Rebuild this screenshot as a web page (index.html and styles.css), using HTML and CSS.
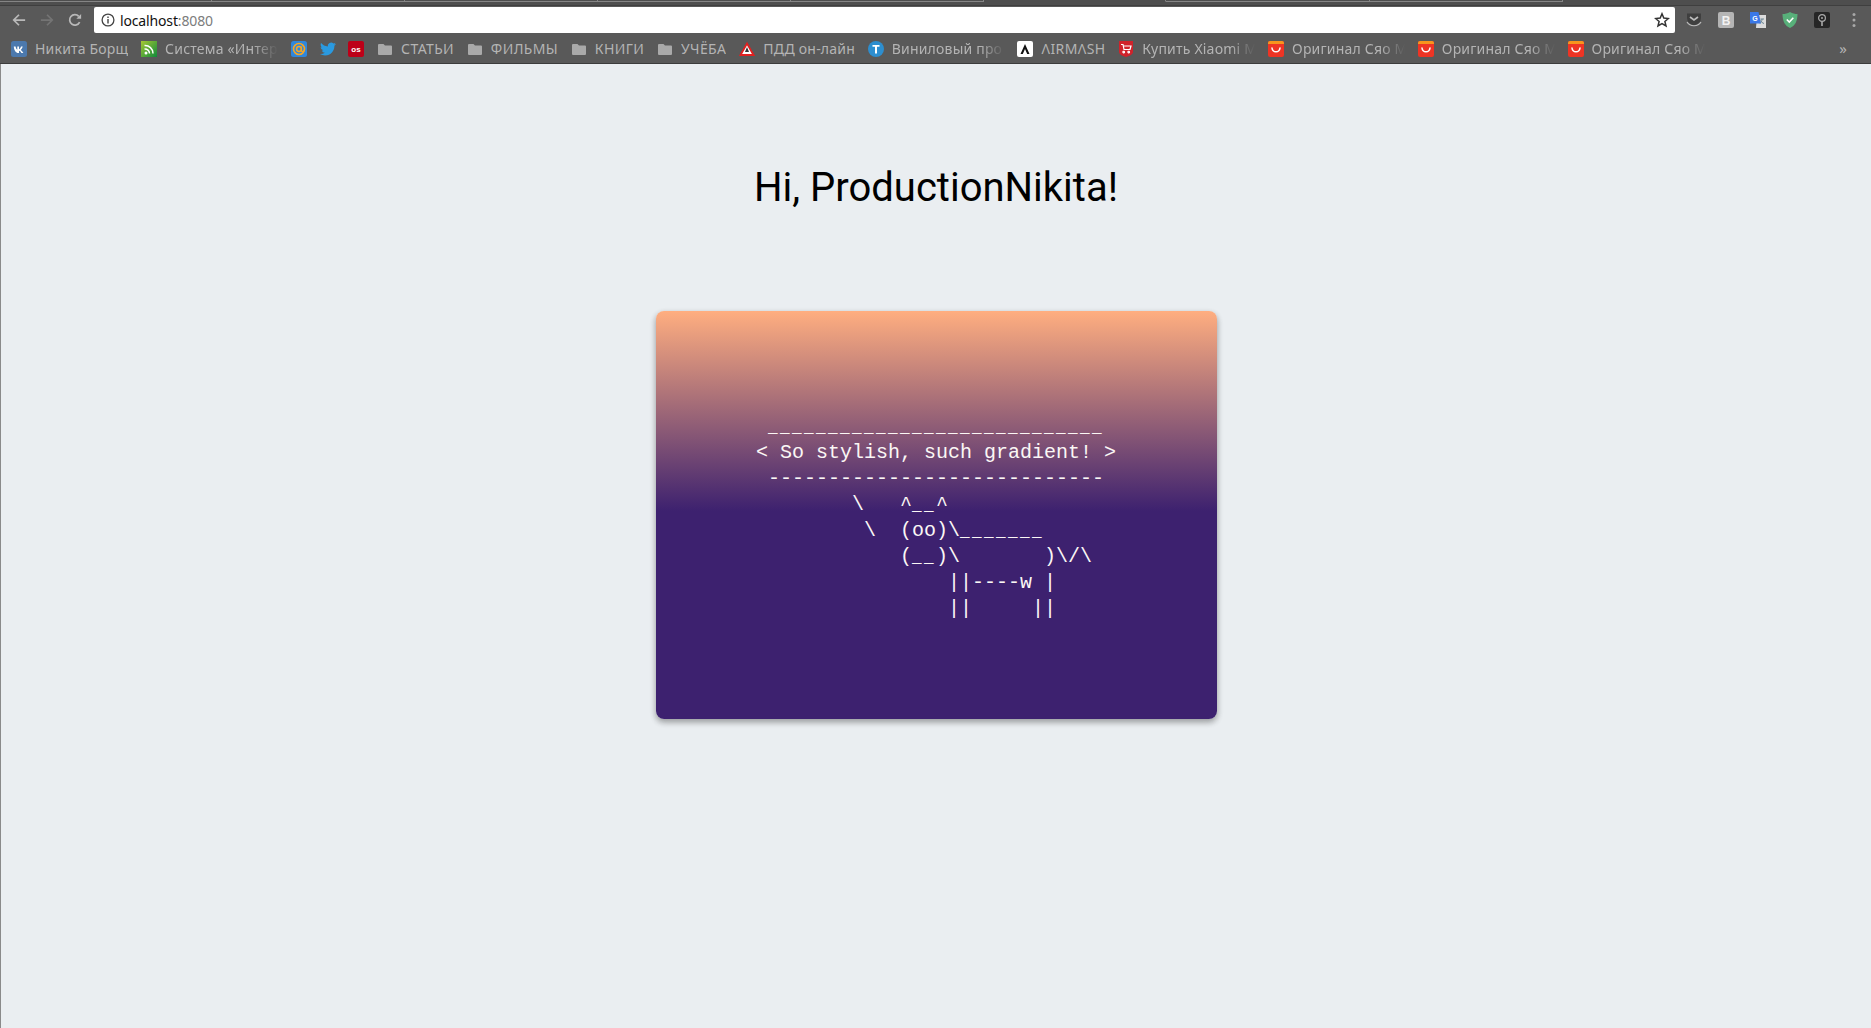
FILE: index.html
```html
<!DOCTYPE html>
<html lang="ru">
<head>
<meta charset="utf-8">
<title>localhost:8080</title>
<link rel="stylesheet" href="styles.css">
</head>
<body>
<svg class="defs" width="0" height="0" aria-hidden="true">
  <symbol id="folder" viewBox="0 0 16 16"><path d="M2 3h4.500l1.500 1.600h6a1 1 0 0 1 1 1V13a1 1 0 0 1-1 1H2a1 1 0 0 1-1-1V4a1 1 0 0 1 1-1z" fill="#a9a9a9"/></symbol>
  <symbol id="ali" viewBox="0 0 16 16"><rect width="16" height="16" rx="2" fill="#ee3424"/><path d="M0 3V2a2 2 0 0 1 2-2h12a2 2 0 0 1 2 2v1z" fill="#f7941d"/><path d="M4 7c.6 5 7.400 5 8 0" fill="none" stroke="#fff" stroke-width="1.500" stroke-linecap="round"/></symbol>
</svg>
<header class="chrome">
  <div class="tabs">
    <span class="tab tab-first"></span><span class="tab"></span><span class="tab"></span><span class="tab"></span><span class="tab"></span><span class="tab tab-active"></span><span class="tab tab-wide"></span><span class="tab"></span>
  </div>
  <div class="toolbar">
    <div class="nav">
      <svg class="nav-icon" viewBox="0 0 16 16"><path d="M15 8H2M8 2L2 8l6 6" fill="none" stroke="#b9b9b9" stroke-width="2"/></svg>
      <svg class="nav-icon" viewBox="0 0 16 16"><path d="M1 8h13M8 2l6 6-6 6" fill="none" stroke="#747474" stroke-width="2"/></svg>
      <svg class="nav-icon" viewBox="0 0 16 16"><path d="M13.300 10.500A6 6 0 1 1 12.300 3.800" fill="none" stroke="#b9b9b9" stroke-width="2"/><path d="M9.500 6.500H15V1z" fill="#b9b9b9"/></svg>
    </div>
    <div class="omnibox">
      <svg class="info" viewBox="0 0 14 14"><circle cx="7" cy="7" r="5.900" fill="none" stroke="#444" stroke-width="1.300"/><path d="M6.300 3.500h1.400v1.400H6.300zM6.300 6h1.400v4.500H6.300z" fill="#444"/></svg>
      <span class="url">localhost<span class="port">:8080</span></span>
      <svg class="star" viewBox="0 0 16 16"><path d="M8 1.800l1.800 4.300 4.600.4-3.500 3 1.100 4.500L8 11.600 4 14l1.100-4.500-3.500-3 4.600-.4z" fill="none" stroke="#333" stroke-width="1.500"/></svg>
    </div>
    <div class="exts">
      <svg class="ext" viewBox="0 0 16 16"><path d="M1 1.500h14V6a7 7 0 0 1-14 0z" fill="#3f3f3f"/><path d="M4 5l4 3 4-3" fill="none" stroke="#bdbdbd" stroke-width="1.600"/><path d="M1 10c3 5 11 5 14 0" fill="none" stroke="#bdbdbd" stroke-width="1.200"/></svg>
      <svg class="ext" viewBox="0 0 16 16"><rect width="16" height="16" rx="2" fill="#b5b5b5"/><text x="8" y="12.500" class="ext-b">B</text></svg>
      <svg class="ext" viewBox="0 0 16 16"><path d="M7 3h9v13H6z" fill="#dcdcdc"/><path d="M0 0h8.500l2.500 11.500H0z" fill="#3b78e7"/><text x="5" y="8.500" class="ext-g">G</text><path d="M10.500 7h3.500M12 7c0 2-1 3.500-2 4.500M10.500 8.500c.8 1.500 2 2.500 3.500 3" fill="none" stroke="#607d8b" stroke-width=".9"/></svg>
      <svg class="ext" viewBox="0 0 16 16"><path d="M8 0c2.500 1.500 5 2 7.500 2C15.500 9 13 14 8 16 3 14 .5 9 .5 2 3 2 5.500 1.500 8 0z" fill="#58b07a"/><path d="M4.800 7.500L7.300 10l4-4.300" fill="none" stroke="#fff" stroke-width="1.600"/></svg>
      <svg class="ext" viewBox="0 0 16 16"><rect width="16" height="16" rx="2" fill="#262626"/><circle cx="8" cy="6" r="3.400" fill="none" stroke="#aaa" stroke-width="1.200"/><circle cx="8" cy="6" r="1" fill="#aaa"/><path d="M8 9.500V14" stroke="#aaa" stroke-width="1.600"/></svg>
      <svg class="menu" viewBox="0 0 4 16"><circle cx="2" cy="2.500" r="1.500" fill="#a8a8a8"/><circle cx="2" cy="8" r="1.500" fill="#a8a8a8"/><circle cx="2" cy="13.500" r="1.500" fill="#a8a8a8"/></svg>
    </div>
  </div>
  <nav class="bookmarks">
    <a class="bm"><svg class="fav" viewBox="0 0 16 16"><rect width="16" height="16" rx="2.500" fill="#4c79ad"/><path d="M2.800 5.500h1.800c.3 1.700 1 3 1.700 3.200V5.500H8v2.700c.8-.1 1.600-1.300 2-2.700h1.700c-.3 1.600-1.200 2.800-2 3.400.8.500 2 1.500 2.600 3.100h-1.900c-.4-1.200-1.400-2.100-2.400-2.200V12H7.500C4.800 12 3.100 9.600 2.800 5.500z" fill="#fff"/></svg><span class="bm-t">Никита Борщ</span></a>
    <a class="bm"><svg class="fav" viewBox="0 0 16 16"><defs><linearGradient id="sg" x1="0" y1="0" x2="1" y2="1"><stop offset="0" stop-color="#a6c832"/><stop offset="1" stop-color="#0f8a3c"/></linearGradient></defs><rect width="16" height="16" fill="url(#sg)"/><circle cx="5" cy="12" r="1.500" fill="#fff"/><path d="M3.500 8a4.500 4.500 0 0 1 5 4.500M3.500 4.500A8 8 0 0 1 12 12.500" fill="none" stroke="#fff" stroke-width="1.500"/></svg><span class="bm-t fade">Система «Интер</span></a>
    <a class="bm"><svg class="fav" viewBox="0 0 16 16"><rect width="16" height="16" rx="2.500" fill="#2f87dc"/><circle cx="8" cy="8" r="5.500" fill="none" stroke="#f6a623" stroke-width="1.600"/><circle cx="8" cy="8" r="2.400" fill="none" stroke="#f6a623" stroke-width="1.500"/><path d="M10.400 5.500v4c0 1.500 2.900 1.500 3.100-1" fill="none" stroke="#f6a623" stroke-width="1.300"/></svg></a>
    <a class="bm"><svg class="fav" viewBox="0 0 24 24"><path d="M23.953 4.570a10 10 0 01-2.825.775 4.958 4.958 0 002.163-2.723c-.951.555-2.005.959-3.127 1.184a4.920 4.920 0 00-8.384 4.482C7.690 8.095 4.067 6.130 1.640 3.162a4.822 4.822 0 00-.666 2.475c0 1.710.870 3.213 2.188 4.096a4.904 4.904 0 01-2.228-.616v.060a4.923 4.923 0 003.946 4.827 4.996 4.996 0 01-2.212.085 4.936 4.936 0 004.604 3.417 9.867 9.867 0 01-6.102 2.105c-.390 0-.779-.023-1.170-.067a13.995 13.995 0 007.557 2.209c9.053 0 13.998-7.496 13.998-13.985 0-.210 0-.420-.015-.630A9.935 9.935 0 0024 4.590z" fill="#2a9ae0"/></svg></a>
    <a class="bm"><svg class="fav" viewBox="0 0 16 16"><rect width="16" height="16" rx="2" fill="#bd0018"/><text x="8" y="11" class="fav-os">os</text></svg></a>
    <a class="bm"><svg class="fav" viewBox="0 0 16 16"><use href="#folder"/></svg><span class="bm-t caps">СТАТЬИ</span></a>
    <a class="bm"><svg class="fav" viewBox="0 0 16 16"><use href="#folder"/></svg><span class="bm-t caps">ФИЛЬМЫ</span></a>
    <a class="bm"><svg class="fav" viewBox="0 0 16 16"><use href="#folder"/></svg><span class="bm-t caps">КНИГИ</span></a>
    <a class="bm"><svg class="fav" viewBox="0 0 16 16"><use href="#folder"/></svg><span class="bm-t caps">УЧЁБА</span></a>
    <a class="bm"><svg class="fav" viewBox="0 0 16 16"><path d="M8 2.500L14.500 14h-13z" fill="#fff" stroke="#e02020" stroke-width="1.800"/><path d="M8 6l2 5H6z" fill="#333"/></svg><span class="bm-t">ПДД он-лайн</span></a>
    <a class="bm"><svg class="fav" viewBox="0 0 16 16"><circle cx="8" cy="8" r="8" fill="#2d8ecf"/><path d="M4.500 4h7v1.800H9V12.500H7V5.800H4.500z" fill="#fff"/></svg><span class="bm-t fade">Виниловый про</span></a>
    <a class="bm"><svg class="fav" viewBox="0 0 16 16"><rect width="16" height="16" rx="2" fill="#fff"/><path d="M8 3l4.500 10h-2.300L8 8l-2.200 5H3.500z" fill="#111"/></svg><span class="bm-t caps">ΛIRMΛSH</span></a>
    <a class="bm"><svg class="fav" viewBox="0 0 16 16"><path d="M1 0h14v11c0 2-3 4-7 5-4-1-7-3-7-5z" fill="#d0232b"/><path d="M3 3.500h2l1 5h6l1-3.500H5.500M6.500 11a.8.8 0 1 0 0 .1zM11.500 11a.8.8 0 1 0 0 .1z" fill="none" stroke="#fff" stroke-width="1.200"/></svg><span class="bm-t fade">Купить Xiaomi M</span></a>
    <a class="bm"><svg class="fav" viewBox="0 0 16 16"><use href="#ali"/></svg><span class="bm-t fade">Оригинал Сяо М</span></a>
    <a class="bm"><svg class="fav" viewBox="0 0 16 16"><use href="#ali"/></svg><span class="bm-t fade">Оригинал Сяо М</span></a>
    <a class="bm"><svg class="fav" viewBox="0 0 16 16"><use href="#ali"/></svg><span class="bm-t fade">Оригинал Сяо М</span></a>
    <span class="more">»</span>
  </nav>
</header>
<main class="page">
  <h1 class="greeting">Hi, ProductionNikita!</h1>
  <section class="card">
<pre class="cow"> <span class="us">____________________________</span>
&lt; So stylish, such gradient! &gt;
 ----------------------------
        \   ^<span class="us">__</span>^
         \  (oo)\<span class="us">_______</span>
            (<span class="us">__</span>)\       )\/\
                ||----w |
                ||     ||</pre>
  </section>
</main>
</body>
</html>
```

FILE: styles.css
```css
* { box-sizing: border-box; }

html, body { margin: 0; height: 100%; }

body {
  display: flex;
  flex-direction: column;
  height: 1028px;
  overflow: hidden;
  background: #eaeef1;
  font-family: "Noto Sans", sans-serif;
}

.defs { display: block; height: 0; }

.chrome {
  flex: none;
  height: 64px;
  background: #595959;
  border-bottom: 1px solid #3c3c3c;
  display: flex;
  flex-direction: column;
}

.tabs {
  flex: none;
  height: 6px;
  display: flex;
  background: #4e4e4e;
  border-bottom: 1px solid #3f3f3f;
}

.tab {
  flex: none;
  width: 193px;
  height: 2px;
  border-right: 1px solid #858585;
  border-bottom: 1px solid #858585;
}

.tab-first { width: 212px; }
.tab-active { width: 182px; border-bottom-color: #4e4e4e; }
.tab-wide { width: 204px; }

.toolbar {
  flex: none;
  height: 29px;
  display: flex;
  align-items: center;
  padding: 1px 0 2px 0;
}

.nav {
  flex: none;
  width: 94px;
  display: flex;
  gap: 14px;
  padding-left: 12px;
}

.nav-icon { width: 14px; height: 14px; display: block; }

.omnibox {
  flex: none;
  width: 1581px;
  height: 26px;
  background: #fff;
  border-radius: 2px;
  display: flex;
  align-items: center;
  padding: 0 5px 0 7px;
}

.info { width: 14px; height: 14px; flex: none; }

.url {
  margin-left: 5px;
  font-size: 14px;
  letter-spacing: -.15px;
  color: #111;
}

.port { color: #7c7c7c; }

.star { width: 16px; height: 16px; margin-left: auto; flex: none; }

.exts {
  flex: 1;
  display: flex;
  align-items: center;
  gap: 16px;
  padding-left: 11px;
}

.ext { width: 16px; height: 16px; flex: none; display: block; }

.ext-b { font: 700 12px "Liberation Sans", sans-serif; fill: #f2f2f2; text-anchor: middle; }
.ext-g { font: 700 7px "Liberation Sans", sans-serif; fill: #fff; text-anchor: middle; }

.menu { width: 4px; height: 16px; flex: none; margin-left: 6px; display: block; }

.bookmarks {
  flex: 1;
  display: flex;
  align-items: center;
  gap: 12.75px;
  padding: 0 0 1px 11px;
  position: relative;
}

.bm {
  display: flex;
  align-items: center;
  gap: 8px;
  flex: none;
  font-size: 14px;
  letter-spacing: .2px;
  color: #b4b4b4;
  white-space: nowrap;
}

.fav { width: 16px; height: 16px; flex: none; display: block; }
.fav-os { font: 700 8px "Liberation Sans", sans-serif; fill: #fff; text-anchor: middle; }

.bm-t { display: block; overflow: hidden; }

.caps { letter-spacing: .4px; }

.fade {
  width: 113px;
  -webkit-mask-image: linear-gradient(90deg, #000 78%, transparent 100%);
  mask-image: linear-gradient(90deg, #000 78%, transparent 100%);
}

.more {
  position: absolute;
  right: 24px;
  top: 3px;
  font-size: 15px;
  line-height: 20px;
  color: #b4b4b4;
}

.page {
  flex: 1;
  display: flex;
  flex-direction: column;
  align-items: center;
  padding-top: 100px;
  border-left: 1px solid #8a8a8a;
}

.greeting {
  margin: 0 0 100px;
  font: 400 40px/47px Roboto, sans-serif;
  color: #000;
}

.card {
  width: 561px;
  height: 408px;
  border-radius: 8px;
  display: flex;
  align-items: center;
  justify-content: center;
  padding-top: 6px;
  background: linear-gradient(180deg, #ffae80 0%, #3d216f 49%, #3d216f 100%);
  box-shadow: 0 3px 6px rgba(0, 0, 0, .16), 0 3px 6px rgba(0, 0, 0, .23);
}

.cow {
  margin: 0;
  font: 400 20px/26px "Liberation Mono", monospace;
  color: #fbf7f5;
}

.us {
  font-size: 16px;
  line-height: 0;
  letter-spacing: 2.4px;
}
```
